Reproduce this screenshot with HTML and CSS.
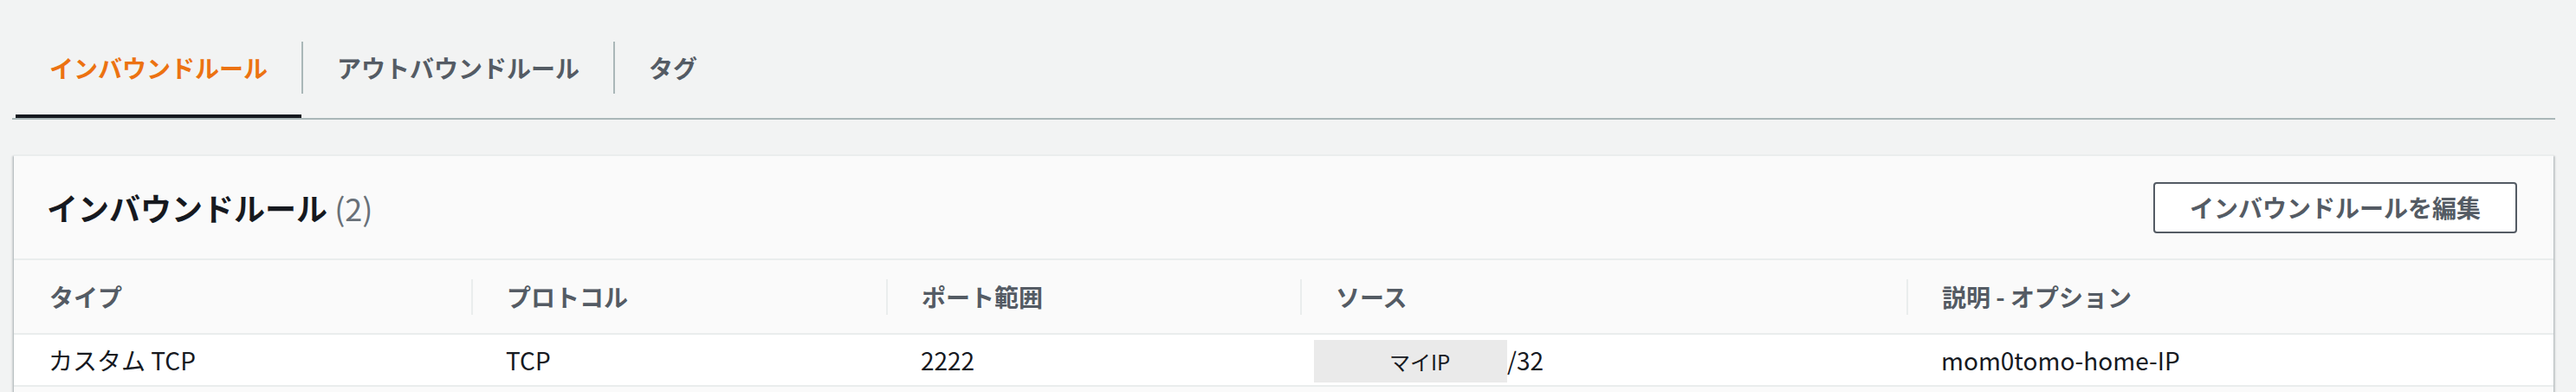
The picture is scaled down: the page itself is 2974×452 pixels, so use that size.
FILE: index.html
```html
<!DOCTYPE html>
<html lang="ja">
<head>
<meta charset="utf-8">
<title>インバウンドルール</title>
<link rel="stylesheet" href="styles.css">
</head>
<body>
<div class="page">
  <div class="tabs">
    <div class="tab tab-active">インバウンドルール</div>
    <div class="tab-divider"></div>
    <div class="tab">アウトバウンドルール</div>
    <div class="tab-divider"></div>
    <div class="tab">タグ</div>
  </div>

  <div class="card">
    <div class="card-header">
      <h2 class="card-title">インバウンドルール <span class="count">(2)</span></h2>
      <button class="btn">インバウンドルールを編集</button>
    </div>
    <div class="table">
      <div class="th">タイプ</div>
      <div class="th th-div">プロトコル</div>
      <div class="th th-div">ポート範囲</div>
      <div class="th th-div">ソース</div>
      <div class="th th-div">説明 - オプション</div>

      <div class="td">カスタム TCP</div>
      <div class="td">TCP</div>
      <div class="td">2222</div>
      <div class="td td-source"><span class="mask">マイIP</span><span>/32</span></div>
      <div class="td">mom0tomo-home-IP</div>

      <div class="td td-next"></div>
      <div class="td td-next"></div>
      <div class="td td-next"></div>
      <div class="td td-next"></div>
      <div class="td td-next"></div>
    </div>
  </div>
</div>
</body>
</html>
```

FILE: styles.css
```css
* { box-sizing: border-box; }

html, body {
  margin: 0;
  padding: 0;
  background: #f2f3f3;
}

body {
  font-family: "Noto Sans CJK JP", "Noto Sans", sans-serif;
  color: #16191f;
}

.page {
  padding: 48px 24px 0 14px;
}

.tabs {
  display: flex;
  align-items: flex-start;
  padding-left: 4px;
  border-bottom: 2px solid #aab7b8;
}

.tab {
  font-size: 28px;
  font-weight: 700;
  line-height: 60px;
  color: #545b64;
  padding: 0 39px 24px;
  border-bottom: 4px solid transparent;
  white-space: nowrap;
}

.tab-active {
  color: #ec7211;
  border-bottom-color: #16191f;
}

.tab-divider {
  width: 2px;
  height: 60px;
  background: #aab7b8;
}

.card {
  margin: 40px 2px 0 2px;
  background: #fff;
  border-top: 2px solid #eaeded;
  box-shadow: 0 2px 2px 0 rgba(0, 28, 36, 0.3),
              2px 2px 2px 0 rgba(0, 28, 36, 0.15),
              -2px 2px 2px 0 rgba(0, 28, 36, 0.15);
}

.card-header {
  height: 120px;
  display: flex;
  align-items: center;
  justify-content: space-between;
  padding: 0 42px 0 38px;
  background: #fafafa;
  border-bottom: 2px solid #eaeded;
}

.card-title {
  margin: 0;
  font-size: 36px;
  font-weight: 700;
  line-height: 44px;
  color: #16191f;
}

.count {
  font-weight: 400;
  color: #687078;
}

.btn {
  height: 59px;
  display: flex;
  align-items: center;
  padding: 0 40px;
  background: #fff;
  border: 2px solid #545b64;
  border-radius: 4px;
  font-family: inherit;
  font-size: 28px;
  font-weight: 700;
  color: #545b64;
  white-space: nowrap;
}

.table {
  display: grid;
  grid-template-columns: 528px 479px 478px 700px 1fr;
}

.th {
  position: relative;
  height: 86px;
  display: flex;
  align-items: center;
  padding-left: 41px;
  background: #fafafa;
  border-bottom: 2px solid #eaeded;
  font-size: 28px;
  font-weight: 700;
  color: #545b64;
}

.th-div::before {
  content: "";
  position: absolute;
  left: 0;
  top: 22px;
  width: 2px;
  height: 41px;
  background: #eaeded;
}

.td {
  height: 60px;
  display: flex;
  align-items: center;
  padding-left: 40px;
  background: #fff;
  border-bottom: 2px solid #eaeded;
  font-size: 28px;
  font-weight: 400;
  color: #16191f;
  white-space: nowrap;
}

.td-source {
  padding-left: 16px;
}

.mask {
  align-self: flex-end;
  margin-bottom: 3px;
  width: 223px;
  height: 49px;
  display: flex;
  align-items: center;
  padding-left: 87px;
  background: #eaeaea;
  font-size: 24px;
  color: #16191f;
}

.td-next {
  background: #fafafa;
}
```
